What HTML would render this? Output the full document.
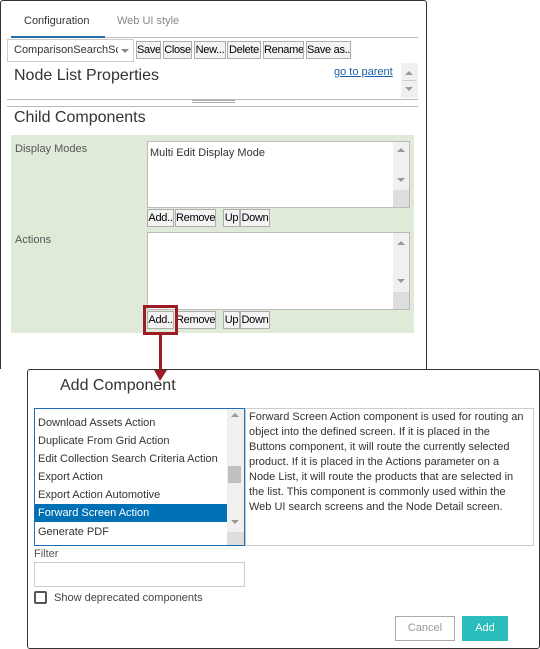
<!DOCTYPE html>
<html><head><meta charset="utf-8"><style>
*{box-sizing:border-box;margin:0;padding:0}
body{width:540px;height:649px;background:#fff;position:relative;overflow:hidden;font-family:"Liberation Sans",sans-serif;color:#333}
.a{position:absolute}
.btn{position:absolute;height:18px;border:1px solid #adadad;background:#f3f3f3;font-size:11px;line-height:16px;text-align:center;color:#000;white-space:nowrap;overflow:hidden;letter-spacing:-0.3px}
.ta{position:absolute;background:#fff;border:1px solid #bbb}
.sb{position:absolute;right:0;top:0;bottom:0;width:16px;background:#f0f0f0}
.up,.dn{position:absolute;left:4px;width:0;height:0;border-left:4px solid transparent;border-right:4px solid transparent}
.up{border-bottom:4px solid #999}
.dn{border-top:4px solid #999}
.it{position:absolute;left:2px;font-size:11px;height:18px;line-height:18px;width:191px;padding-left:1px}
</style></head><body>
<div class="a" style="left:0;top:0;width:427px;height:480px;border:1px solid #333;border-radius:3px"></div>
<div class="a" style="left:24px;top:15px;font-size:11px;color:#333">Configuration</div>
<div class="a" style="left:117px;top:15px;font-size:11px;color:#888">Web UI style</div>
<div class="a" style="left:11px;top:37px;width:407px;height:1px;background:#bbb"></div>
<div class="a" style="left:11px;top:36px;width:94px;height:2px;background:#2a6fa8"></div>
<div class="a" style="left:7px;top:39px;width:127px;height:23px;border:1px solid #ccc;font-size:11px;line-height:21px;padding-left:6px;color:#333;overflow:hidden;white-space:nowrap"><span style="display:inline-block;width:104px;overflow:hidden;vertical-align:top">ComparisonSearchSc</span></div>
<div class="a" style="left:121px;top:49px;border-left:4px solid transparent;border-right:4px solid transparent;border-top:4px solid #888"></div>
<div class="btn" style="left:136px;top:41px;width:25px">Save</div>
<div class="btn" style="left:163px;top:41px;width:29px">Close</div>
<div class="btn" style="left:194px;top:41px;width:32px">New...</div>
<div class="btn" style="left:227px;top:41px;width:34px">Delete</div>
<div class="btn" style="left:263px;top:41px;width:41px">Rename</div>
<div class="btn" style="left:306px;top:41px;width:45px">Save as...</div>
<div class="a" style="left:14px;top:67px;font-size:16px;color:#333">Node List Properties</div>
<div class="a" style="left:334px;top:66px;font-size:11px;color:#1a5fa8;text-decoration:underline">go to parent</div>
<div class="a" style="left:401px;top:63px;width:17px;height:35px;background:#f0f0f0">
<div class="up" style="top:8px;left:4px"></div><div class="a" style="left:2px;top:17px;width:13px;height:1px;background:#ccc"></div><div class="dn" style="top:24px;left:4px"></div></div>
<div class="a" style="left:7px;top:99px;width:411px;height:1px;background:#bbb"></div>
<div class="a" style="left:192px;top:100px;width:43px;height:3px;border-top:1px solid #aaa;border-bottom:1px solid #aaa"></div>
<div class="a" style="left:7px;top:106px;width:411px;height:1px;background:#bbb"></div>
<div class="a" style="left:14px;top:109px;font-size:16px;color:#333">Child Components</div>
<div class="a" style="left:11px;top:135px;width:403px;height:198px;background:#dfead8"></div>
<div class="a" style="left:15px;top:143px;font-size:11px;color:#555">Display Modes</div>
<div class="ta" style="left:147px;top:141px;width:263px;height:67px"><div class="a" style="left:2px;top:5px;font-size:11px;color:#333">Multi Edit Display Mode</div><div class="sb"><div class="up" style="top:6px"></div><div class="dn" style="top:36px"></div><div class="a" style="left:0;bottom:0;width:16px;height:17px;background:#ddd"></div></div></div>
<div class="btn" style="left:147px;top:209px;width:27px">Add..</div>
<div class="btn" style="left:175px;top:209px;width:41px">Remove</div>
<div class="btn" style="left:223px;top:209px;width:17px">Up</div>
<div class="btn" style="left:240px;top:209px;width:30px">Down</div>
<div class="a" style="left:15px;top:234px;font-size:11px;color:#555">Actions</div>
<div class="ta" style="left:147px;top:232px;width:263px;height:78px"><div class="sb"><div class="up" style="top:8px"></div><div class="dn" style="top:46px"></div><div class="a" style="left:0;bottom:0;width:16px;height:17px;background:#ddd"></div></div></div>
<div class="btn" style="left:147px;top:311px;width:27px">Add..</div>
<div class="btn" style="left:175px;top:311px;width:41px">Remove</div>
<div class="btn" style="left:223px;top:311px;width:17px">Up</div>
<div class="btn" style="left:240px;top:311px;width:30px">Down</div>
<div class="a" style="left:143px;top:305px;width:35px;height:30px;border:3px solid #9b1c22"></div>
<div class="a" style="left:0;top:369px;width:540px;height:280px;background:#fff"></div>
<div class="a" style="left:27px;top:369px;width:513px;height:280px;border:1px solid #333;border-radius:3px;background:#fff"></div>
<div class="a" style="left:159px;top:334px;width:3px;height:40px;background:#9b1c22"></div>
<div class="a" style="left:154px;top:370px;border-left:6px solid transparent;border-right:7px solid transparent;border-top:11px solid #9b1c22"></div>
<div class="a" style="left:60px;top:377px;font-size:16px;color:#333">Add Component</div>
<div class="a" style="left:34px;top:408px;width:211px;height:138px;border:1px solid #1e6fb5;overflow:hidden">
<div class="it" style="top:5px">Download Assets Action</div>
<div class="it" style="top:23px">Duplicate From Grid Action</div>
<div class="it" style="top:41px">Edit Collection Search Criteria Action</div>
<div class="it" style="top:59px">Export Action</div>
<div class="it" style="top:77px">Export Action Automotive</div>
<div class="it" style="top:95px;background:#0070b5;color:#fff;left:0;width:193px;padding-left:3px">Forward Screen Action</div>
<div class="it" style="top:114px">Generate PDF</div>
<div class="a" style="right:0;top:0;width:17px;height:136px;background:#f0f0f0"><div class="up" style="top:4px"></div><div class="a" style="left:1px;top:57px;width:13px;height:17px;background:#c0c0c0"></div><div class="dn" style="top:111px"></div><div class="a" style="left:0;bottom:0;width:17px;height:13px;background:#ddd"></div></div>
</div>
<div class="a" style="left:245px;top:408px;width:289px;height:138px;border:1px solid #ccc;font-size:11px;line-height:15px;padding:1px 5px 1px 3px;color:#333">Forward Screen Action component is used for routing an object into the defined screen. If it is placed in the Buttons component, it will route the currently selected product. If it is placed in the Actions parameter on a Node List, it will route the products that are selected in the list. This component is commonly used within the Web UI search screens and the Node Detail screen.</div>
<div class="a" style="left:34px;top:548px;font-size:11px;color:#555">Filter</div>
<div class="a" style="left:34px;top:562px;width:211px;height:25px;border:1px solid #ccc"></div>
<div class="a" style="left:34px;top:591px;width:13px;height:13px;border:2px solid #555;border-radius:2px"></div>
<div class="a" style="left:54px;top:592px;font-size:11px;color:#444">Show deprecated components</div>
<div class="a" style="left:395px;top:616px;width:60px;height:25px;border:1px solid #aaa;font-size:11px;line-height:23px;text-align:center;color:#999">Cancel</div>
<div class="a" style="left:462px;top:616px;width:46px;height:25px;background:#2bbcbc;font-size:11px;line-height:25px;text-align:center;color:#fff">Add</div>
</body></html>
